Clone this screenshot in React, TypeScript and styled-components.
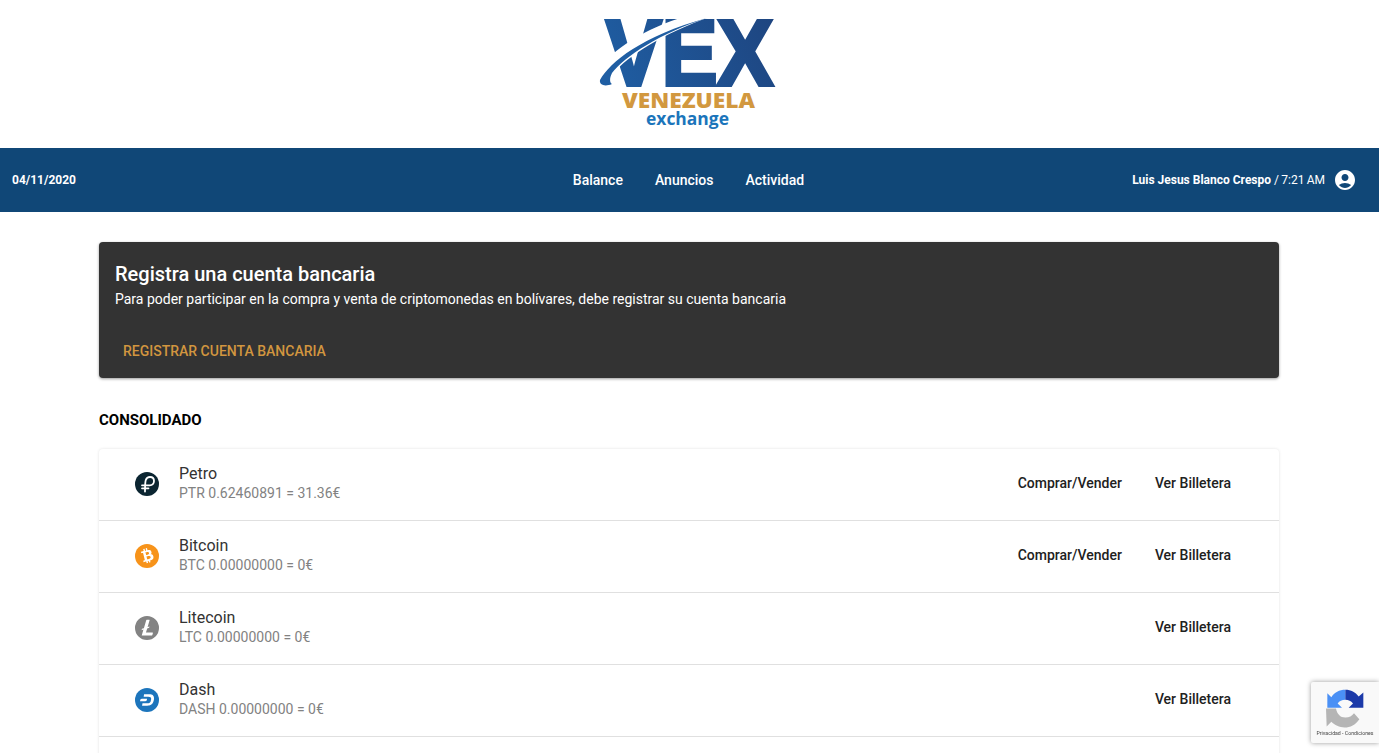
import styled, { createGlobalStyle } from 'styled-components';
import { MdAccountCircle } from 'react-icons/md';
import { FaBtc } from 'react-icons/fa';
import { SiLitecoin, SiDash } from 'react-icons/si';

const GlobalStyle = createGlobalStyle`
  html, body {
    margin: 0;
    height: 753px;
    overflow: hidden;
    background: #fff;
    font-family: Roboto, "Liberation Sans", sans-serif;
  }
`;

const LogoBar = styled.header`
  height: 148px;
  display: flex;
  justify-content: center;
  background: #fff;
`;

const LogoSvg = styled.svg`
  width: 200px;
  height: 135px;
  margin-top: 5px;
  margin-left: 1px;
  overflow: visible;
`;

const Navbar = styled.nav`
  height: 64px;
  background: #104777;
  color: #fff;
  display: grid;
  grid-template-columns: 1fr auto 1fr;
  align-items: center;
  padding: 0 22px 0 12px;
`;

const DateText = styled.div`
  font-size: 12px;
  font-weight: 700;
`;

const NavMenu = styled.div`
  display: flex;
  gap: 32px;
  margin-left: 8px;
`;

const NavLink = styled.a`
  font-size: 14px;
  font-weight: 500;
`;

const UserBox = styled.div`
  display: flex;
  justify-content: flex-end;
  align-items: center;
  gap: 8px;
  font-size: 12px;
  strong {
    font-weight: 700;
  }
  svg {
    font-size: 24px;
  }
`;

const TimeText = styled.span`
  word-spacing: -0.7px;
`;

const Main = styled.main`
  width: 1180px;
  margin: 30px 0 0 99px;
`;

const Banner = styled.section`
  height: 136px;
  box-sizing: border-box;
  background: #333;
  color: #fff;
  border-radius: 4px;
  box-shadow: 0 1px 3px rgba(0, 0, 0, 0.4);
  padding: 21px 16px 0;
  display: flex;
  flex-direction: column;
`;

const BannerTitle = styled.h2`
  margin: 0;
  font-size: 20px;
  line-height: 22px;
  font-weight: 500;
`;

const BannerText = styled.p`
  margin: 4px 0 0;
  font-size: 14px;
  line-height: 20px;
`;

const BannerAction = styled.a`
  margin: 30px 0 0 8px;
  font-size: 14px;
  line-height: 24px;
  font-weight: 500;
  color: #d2963f;
`;

const SectionTitle = styled.h3`
  margin: 33px 0 20px;
  font-size: 15px;
  line-height: 18px;
  font-weight: 700;
  color: #000;
`;

const List = styled.div`
  border-radius: 4px;
  box-shadow: 0 0 3px rgba(0, 0, 0, 0.12);
`;

const Row = styled.div`
  height: 72px;
  box-sizing: border-box;
  border-bottom: 1px solid #e0e0e0;
  display: flex;
  align-items: center;
  padding: 0 48px 2px 36px;
`;

const CoinIcon = styled.div<{ $color: string }>`
  width: 24px;
  height: 24px;
  flex: none;
  border-radius: 50%;
  color: ${p => p.$color};
  margin-right: 20px;
  display: flex;
  svg {
    width: 24px;
    height: 24px;
  }
`;

const CoinText = styled.div`
  flex: 1;
`;

const CoinName = styled.div`
  font-size: 16px;
  line-height: 20px;
  color: #333;
`;

const CoinAmount = styled.div`
  margin-top: -1px;
  font-size: 14px;
  line-height: 20px;
  color: #828282;
`;

const Actions = styled.div`
  display: flex;
  gap: 33px;
  margin-bottom: 2px;
`;

const ActionLink = styled.a`
  font-size: 14px;
  line-height: 20px;
  font-weight: 500;
  color: #212121;
`;

const CoinBadge = styled.div<{ $bg: string; $size: number; $tilt?: number }>`
  width: 24px;
  height: 24px;
  border-radius: 50%;
  background: ${p => p.$bg};
  color: #fff;
  display: flex;
  align-items: center;
  justify-content: center;
  svg {
    width: ${p => p.$size}px;
    height: ${p => p.$size}px;
    transform: rotate(${p => p.$tilt ?? 0}deg);
  }
`;

const Recaptcha = styled.aside`
  position: fixed;
  right: 0;
  top: 682px;
  width: 68px;
  height: 61px;
  box-sizing: border-box;
  background: #f9f9f9;
  border-radius: 2px 0 0 2px;
  box-shadow: 0 0 5px rgba(0, 0, 0, 0.4);
  display: flex;
  flex-direction: column;
  align-items: center;
  padding-top: 7px;
`;

const RecaptchaText = styled.div`
  margin-top: 1px;
  font-size: 5.2px;
  line-height: 8px;
  color: #444;
  white-space: nowrap;
`;

function Logo() {
  return (
    <LogoSvg viewBox="0 0 200 135">
      <defs>
        <linearGradient id="vex" gradientUnits="userSpaceOnUse" x1="14" y1="82" x2="185" y2="14">
          <stop offset="0" stopColor="#1f5ea3" />
          <stop offset="1" stopColor="#1e4580" />
        </linearGradient>
      </defs>
      <text
        x="16"
        y="80"
        fontFamily='"Liberation Sans", sans-serif'
        fontWeight="700"
        fontSize="92"
        textLength="167"
        lengthAdjust="spacingAndGlyphs"
        fill="url(#vex)"
        stroke="url(#vex)"
        strokeWidth="4"
      >
        VEX
      </text>
      <path d="M4 84L10 62C28 40 62 20 104 9L120 12C74 28 36 52 24 68L26 84Z" fill="#fff" />
      <path d="M10 75C20 57 52 31 117 13C70 28 34 52 22 68C19 74 20 78 22 79C15 82 9 80 10 75Z" fill="#1f5ea3" />
      <text
        x="98.5"
        y="103"
        textAnchor="middle"
        fontFamily='"Open Sans", sans-serif'
        fontWeight="800"
        fontSize="21"
        textLength="133"
        lengthAdjust="spacingAndGlyphs"
        fill="#d2983f"
      >
        VENEZUELA
      </text>
      <text
        x="97.5"
        y="120"
        textAnchor="middle"
        fontFamily='"Open Sans", sans-serif'
        fontWeight="700"
        fontSize="18"
        textLength="83"
        lengthAdjust="spacingAndGlyphs"
        fill="#1b75bb"
      >
        exchange
      </text>
    </LogoSvg>
  );
}

function PetroIcon() {
  return (
    <svg viewBox="0 0 24 24">
      <circle cx="12" cy="12" r="12" fill="#0b2531" />
      <path
        d="M10 19.500C10 15 10 10.500 10.800 8C11.500 6 13 5 15 5C17.500 5 19 6.800 19 9C19 11.500 17.300 13.300 14.800 13.300H7M7 16.300H13.500"
        fill="none"
        stroke="#fff"
        strokeWidth="1.8"
        strokeLinecap="round"
      />
    </svg>
  );
}

function RecaptchaIcon() {
  return (
    <svg width="38" height="39" viewBox="22 20 114 116">
      <path d="M80 22V52C70 52 62 56 57 63L70 76H26V32L38 44C47 30 62 22 80 22Z" fill="#4a90f5" />
      <path d="M80 22C97 22 110 29 120 42L134 30V76H90L103 63C97 56 90 52 80 52Z" fill="#1c3aa9" />
      <path d="M22 78H52C55 95 65 105 80 105C92 105 100 100 106 92L122 110C110 127 95 135 78 135C62 135 48 128 38 118L24 132Z" fill="#b5b5b5" />
    </svg>
  );
}

const coins = [
  { name: 'Petro', amount: 'PTR 0.62460891 = 31.36€', color: '#0b2531', icon: <PetroIcon />, trade: true },
  { name: 'Bitcoin', amount: 'BTC 0.00000000 = 0€', color: '#f7931a', icon: <CoinBadge $bg="#f7931a" $size={15} $tilt={-14}><FaBtc /></CoinBadge>, trade: true },
  { name: 'Litecoin', amount: 'LTC 0.00000000 = 0€', color: '#838383', icon: <SiLitecoin />, trade: false },
  { name: 'Dash', amount: 'DASH 0.00000000 = 0€', color: '#1c75bc', icon: <CoinBadge $bg="#1c75bc" $size={14}><SiDash /></CoinBadge>, trade: false },
];

export default function App() {
  return (
    <>
      <GlobalStyle />
      <LogoBar>
        <Logo />
      </LogoBar>
      <Navbar>
        <DateText>04/11/2020</DateText>
        <NavMenu>
          <NavLink>Balance</NavLink>
          <NavLink>Anuncios</NavLink>
          <NavLink>Actividad</NavLink>
        </NavMenu>
        <UserBox>
          <span>
            <strong>Luis Jesus Blanco Crespo</strong> <TimeText>/ 7:21 AM</TimeText>
          </span>
          <MdAccountCircle />
        </UserBox>
      </Navbar>
      <Main>
        <Banner>
          <BannerTitle>Registra una cuenta bancaria</BannerTitle>
          <BannerText>
            Para poder participar en la compra y venta de criptomonedas en bolívares, debe registrar su cuenta bancaria
          </BannerText>
          <BannerAction>REGISTRAR CUENTA BANCARIA</BannerAction>
        </Banner>
        <SectionTitle>CONSOLIDADO</SectionTitle>
        <List>
          {coins.map(coin => (
            <Row key={coin.name}>
              <CoinIcon $color={coin.color}>{coin.icon}</CoinIcon>
              <CoinText>
                <CoinName>{coin.name}</CoinName>
                <CoinAmount>{coin.amount}</CoinAmount>
              </CoinText>
              <Actions>
                {coin.trade && <ActionLink>Comprar/Vender</ActionLink>}
                <ActionLink>Ver Billetera</ActionLink>
              </Actions>
            </Row>
          ))}
          <Row />
        </List>
      </Main>
      <Recaptcha>
        <RecaptchaIcon />
        <RecaptchaText>Privacidad - Condiciones</RecaptchaText>
      </Recaptcha>
    </>
  );
}
